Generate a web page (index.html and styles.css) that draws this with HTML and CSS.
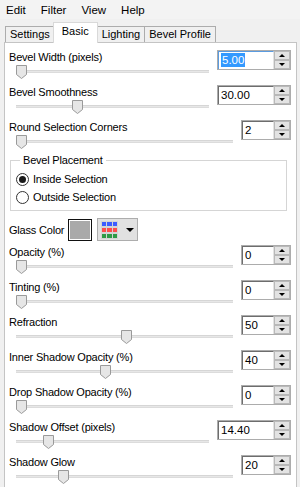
FILE: index.html
```html
<!DOCTYPE html>
<html lang="en">
<head>
    <meta charset="UTF-8">
    <meta name="viewport" content="width=device-width, initial-scale=1.0">
    <title>Glass Bevel</title>
    <link rel="stylesheet" href="styles.css">
</head>
<body>
    <svg width="0" height="0" class="defs">
        <symbol id="thumb" viewBox="0 0 11 14">
            <path d="M0.5 0.5 H10.5 V9.5 L5.5 13.5 L0.5 9.5 Z" fill="#e6e6e6" stroke="#9a9a9a"/>
        </symbol>
    </svg>

    <div class="menubar">
        <span>Edit</span>
        <span>Filter</span>
        <span>View</span>
        <span>Help</span>
    </div>

    <div class="tabs">
        <div class="tab">Settings</div>
        <div class="tab active">Basic</div>
        <div class="tab">Lighting</div>
        <div class="tab">Bevel Profile</div>
    </div>

    <div class="panel">
        <div class="row">
            <div class="label">Bevel Width (pixels)</div>
            <div class="slider"><div class="track"></div><svg class="thumb" style="left: 0px"><use href="#thumb"/></svg></div>
            <div class="spin wide focus">
                <div class="field"><span class="selected">5.00</span></div>
                <div class="btns"><span class="up"></span><span class="down"></span></div>
            </div>
        </div>

        <div class="row">
            <div class="label">Bevel Smoothness</div>
            <div class="slider"><div class="track"></div><svg class="thumb" style="left: 56px"><use href="#thumb"/></svg></div>
            <div class="spin wide">
                <div class="field">30.00</div>
                <div class="btns"><span class="up"></span><span class="down"></span></div>
            </div>
        </div>

        <div class="row">
            <div class="label">Round Selection Corners</div>
            <div class="slider"><div class="track"></div><svg class="thumb" style="left: 0px"><use href="#thumb"/></svg></div>
            <div class="spin narrow">
                <div class="field">2</div>
                <div class="btns"><span class="up"></span><span class="down"></span></div>
            </div>
        </div>

        <fieldset class="group">
            <legend>Bevel Placement</legend>
            <div class="radio checked"><span class="dot"></span>Inside Selection</div>
            <div class="radio"><span class="dot"></span>Outside Selection</div>
        </fieldset>

        <div class="color-row">
            <div class="color-label">Glass Color</div>
            <div class="swatch"></div>
            <div class="palette-btn">
                <svg width="17" height="18" viewBox="0 0 17 18">
                    <rect x="0" y="0" width="17" height="18" fill="#d4d4d4"/>
                    <rect x="1" y="1" width="4" height="4" fill="#3c5cff"/>
                    <rect x="6" y="1" width="5" height="4" fill="#3c5cff"/>
                    <rect x="12" y="1" width="4" height="4" fill="#3c5cff"/>
                    <rect x="1" y="7" width="4" height="4" fill="#ff4c4c"/>
                    <rect x="6" y="7" width="5" height="4" fill="#ff4c4c"/>
                    <rect x="12" y="7" width="4" height="4" fill="#ff4c4c"/>
                    <rect x="1" y="13" width="4" height="4" fill="#2e9a46"/>
                    <rect x="6" y="13" width="5" height="4" fill="#2e9a46"/>
                    <rect x="12" y="13" width="4" height="4" fill="#2e9a46"/>
                </svg>
                <span class="caret"></span>
            </div>
        </div>

        <div class="row">
            <div class="label">Opacity (%)</div>
            <div class="slider"><div class="track"></div><svg class="thumb" style="left: 0px"><use href="#thumb"/></svg></div>
            <div class="spin narrow">
                <div class="field">0</div>
                <div class="btns"><span class="up"></span><span class="down"></span></div>
            </div>
        </div>

        <div class="row">
            <div class="label">Tinting (%)</div>
            <div class="slider"><div class="track"></div><svg class="thumb" style="left: 0px"><use href="#thumb"/></svg></div>
            <div class="spin narrow">
                <div class="field">0</div>
                <div class="btns"><span class="up"></span><span class="down"></span></div>
            </div>
        </div>

        <div class="row">
            <div class="label">Refraction</div>
            <div class="slider"><div class="track"></div><svg class="thumb" style="left: 105px"><use href="#thumb"/></svg></div>
            <div class="spin narrow">
                <div class="field">50</div>
                <div class="btns"><span class="up"></span><span class="down"></span></div>
            </div>
        </div>

        <div class="row">
            <div class="label">Inner Shadow Opacity (%)</div>
            <div class="slider"><div class="track"></div><svg class="thumb" style="left: 84px"><use href="#thumb"/></svg></div>
            <div class="spin narrow">
                <div class="field">40</div>
                <div class="btns"><span class="up"></span><span class="down"></span></div>
            </div>
        </div>

        <div class="row">
            <div class="label">Drop Shadow Opacity (%)</div>
            <div class="slider"><div class="track"></div><svg class="thumb" style="left: 0px"><use href="#thumb"/></svg></div>
            <div class="spin narrow">
                <div class="field">0</div>
                <div class="btns"><span class="up"></span><span class="down"></span></div>
            </div>
        </div>

        <div class="row">
            <div class="label">Shadow Offset (pixels)</div>
            <div class="slider"><div class="track"></div><svg class="thumb" style="left: 27px"><use href="#thumb"/></svg></div>
            <div class="spin wide">
                <div class="field">14.40</div>
                <div class="btns"><span class="up"></span><span class="down"></span></div>
            </div>
        </div>

        <div class="row">
            <div class="label">Shadow Glow</div>
            <div class="slider"><div class="track"></div><svg class="thumb" style="left: 42px"><use href="#thumb"/></svg></div>
            <div class="spin narrow">
                <div class="field">20</div>
                <div class="btns"><span class="up"></span><span class="down"></span></div>
            </div>
        </div>
    </div>
</body>
</html>
```

FILE: styles.css
```css
* {
    margin: 0;
    padding: 0;
    box-sizing: border-box;
}

body {
    width: 300px;
    height: 487px;
    overflow: hidden;
    background: #f0f0f0;
    font-family: "Liberation Sans", Arial, sans-serif;
    font-size: 11px;
    letter-spacing: -0.2px;
    color: #000;
}

.defs {
    position: absolute;
}

/* menu */
.menubar {
    display: flex;
    gap: 15px;
    height: 19px;
    padding: 2px 0 0 6px;
    line-height: 16px;
    font-size: 11.5px;
    letter-spacing: 0;
    background: #f3f3f3;
}

/* tabs */
.tabs {
    display: flex;
    align-items: flex-end;
    height: 20px;
    margin-top: 3px;
    padding-left: 5px;
}

.tab {
    height: 16px;
    padding: 0 4px;
    line-height: 14px;
    letter-spacing: 0;
    border: 1px solid #acacac;
    border-bottom: none;
    border-right: none;
    background: #f0f0f0;
}

.tab:nth-child(4) {
    border-right: 1px solid #acacac;
}

.tab.active {
    position: relative;
    z-index: 1;
    height: 21px;
    margin: 0 -1px -1px -1px;
    padding: 1px 8px 0 8px;
    background: #fff;
    border: 1px solid #d9d9d9;
    border-bottom: none;
}

.tab.active + .tab {
    border-left: 1px solid #acacac;
}

/* panel */
.panel {
    height: 460px;
    margin: 0 3px 0 4px;
    padding: 7px 5px 0 4px;
    background: #fff;
    border: 1px solid #c4c4c4;
}

.row {
    display: grid;
    grid-template-columns: 1fr auto;
    grid-template-rows: 15px 20px;
    column-gap: 8px;
}

.label {
    grid-column: 1;
    grid-row: 1;
    line-height: 15px;
    white-space: nowrap;
}

.slider {
    position: relative;
    grid-column: 1;
    grid-row: 2;
    margin-left: 7px;
}

.track {
    height: 3px;
    margin-top: 5px;
    background: #e7e7e7;
    border-top: 1px solid #d6d6d6;
    border-bottom: 1px solid #dcdcdc;
}

.thumb {
    position: absolute;
    top: 0;
    width: 11px;
    height: 14px;
}

/* spin box */
.spin {
    grid-column: 2;
    grid-row: 1 / 3;
    align-self: start;
    display: flex;
    height: 20px;
    border: 1px solid #acacac;
}

.spin.wide {
    width: 74px;
}

.spin.narrow {
    width: 50px;
}

.field {
    flex: 1;
    padding-left: 2px;
    line-height: 16px;
    font-size: 11.5px;
    letter-spacing: 0;
    background: #fff;
    border-top: 1px solid #6d6d6d;
    border-left: 1px solid #6d6d6d;
    border-right: 1px solid #e3e3e3;
}

.spin.focus .field {
    border-color: #5a9be0;
    border-right-color: #e3e3e3;
}

.selected {
    display: inline-block;
    margin-top: 1px;
    padding: 0 1px;
    line-height: 14px;
    color: #fff;
    background: #3399ff;
}

.btns {
    display: flex;
    flex-direction: column;
    width: 16px;
    background: #f0f0f0;
}

.btns span {
    flex: 1;
    display: flex;
    align-items: center;
    justify-content: center;
    background: #e3e3e3;
    border: 1px solid #b9b9b9;
}

.btns span::after {
    content: "";
    border-left: 3px solid transparent;
    border-right: 3px solid transparent;
}

.btns .up::after {
    border-bottom: 3px solid #000;
}

.btns .down::after {
    border-top: 3px solid #000;
}

/* group box */
.group {
    margin: -2px 4px 0 1px;
    padding: 2px 5px 4px 5px;
    border: 1px solid #d5d5d5;
}

.group legend {
    margin-left: 4px;
    padding: 0 3px;
    line-height: 15px;
}

.radio {
    display: flex;
    align-items: center;
    height: 18px;
    gap: 4px;
}

.dot {
    display: flex;
    align-items: center;
    justify-content: center;
    width: 13px;
    height: 13px;
    border: 1px solid #333;
    border-radius: 50%;
    background: #fff;
}

.radio.checked .dot::after {
    content: "";
    width: 7px;
    height: 7px;
    border-radius: 50%;
    background: #1a1a1a;
}

/* glass color */
.color-row {
    display: flex;
    align-items: center;
    height: 23px;
    margin: 7px 0 4px 0;
}

.color-label {
    width: 59px;
}

.swatch {
    width: 24px;
    height: 22px;
    background: #a9a9a9;
    border: 1px solid #111;
    box-shadow: inset 0 0 0 1px #fff;
}

.palette-btn {
    display: flex;
    align-items: center;
    gap: 8px;
    width: 41px;
    height: 23px;
    margin-left: 5px;
    padding-left: 3px;
    background: #e1e1e1;
    border: 1px solid #adadad;
}

.caret {
    border-left: 4px solid transparent;
    border-right: 4px solid transparent;
    border-top: 4px solid #000;
}
```
